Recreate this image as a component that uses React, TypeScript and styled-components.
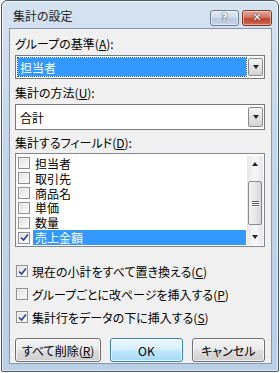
import React from 'react';
import styled, { createGlobalStyle } from 'styled-components';

const GlobalStyle = createGlobalStyle`
  html, body {
    margin: 0;
    padding: 0;
    background: #ffffff;
  }
  body {
    font-family: 'Noto Sans CJK JP', sans-serif;
    font-feature-settings: 'palt';
    font-size: 12px;
    color: #000;
  }
`;

const Window = styled.div`
  width: 278px;
  height: 372px;
  margin: 0 0 0 1px;
  box-sizing: border-box;
  border: 1px solid #4d5a68;
  border-radius: 6px 6px 2px 2px;
  background: linear-gradient(180deg, #d6e3f1 0%, #c2d5ea 40%, #b9cfe6 100%);
  display: flex;
  flex-direction: column;
  padding: 0 6px 7px 7px;
  box-shadow: inset 0 0 0 1px rgba(255, 255, 255, 0.55);
`;

const TitleBar = styled.div`
  height: 27px;
  display: flex;
  align-items: center;
  padding-left: 4px;
`;

const Title = styled.div`
  flex: 1;
  font-size: 12px;
  color: #1e1e1e;
  padding-top: 2px;
`;

const CaptionButton = styled.div<{ $close?: boolean }>`
  width: ${(p) => (p.$close ? 30 : 29)}px;
  height: 16px;
  margin-top: 6px;
  margin-left: ${(p) => (p.$close ? 3 : 0)}px;
  box-sizing: border-box;
  border: 1px solid ${(p) => (p.$close ? '#7e3226' : '#6c7d92')};
  border-radius: 3px;
  display: flex;
  align-items: center;
  justify-content: center;
  background: ${(p) =>
    p.$close
      ? 'linear-gradient(180deg, #e3a99d 0%, #d27562 45%, #c2432d 55%, #cf6a4f 100%)'
      : 'linear-gradient(180deg, #e4ecf5 0%, #cfdbea 45%, #b9c9dc 55%, #c9d7e7 100%)'};
  box-shadow: inset 0 0 0 1px rgba(255, 255, 255, 0.45);
  color: #fff;
  font-family: 'DejaVu Sans', sans-serif;
  font-weight: bold;
  font-size: 11px;
  text-shadow: 0 0 2px #3a4a5e, 0 0 1px #3a4a5e;
`;

const Panel = styled.div`
  flex: 1;
  background: #f0f0f0;
  border: 1px solid #8497ad;
  padding: 0 6px 0 5px;
  display: flex;
  flex-direction: column;
`;

const Label = styled.div<{ $top: number }>`
  margin-top: ${(p) => p.$top}px;
  height: 16px;
  line-height: 16px;
  white-space: nowrap;
`;

const Key = styled.span`
  text-decoration: underline;
`;

const Combo = styled.div<{ $height: number }>`
  margin-top: 3px;
  height: ${(p) => p.$height}px;
  box-sizing: border-box;
  border: 1px solid #7a7a7a;
  background: #fff;
  display: flex;
  align-items: stretch;
  padding: 2px 1px 2px 2px;
`;

const ComboValue = styled.div<{ $selected?: boolean }>`
  flex: 1;
  display: flex;
  align-items: center;
  padding-left: 2px;
  background: ${(p) => (p.$selected ? '#3399ff' : 'transparent')};
  color: ${(p) => (p.$selected ? '#fff' : '#000')};
  outline: ${(p) => (p.$selected ? '1px dotted #1d5fa8' : 'none')};
`;

const DropButton = styled.div`
  width: 15px;
  margin-left: 2px;
  box-sizing: border-box;
  border: 1px solid #8a8a8a;
  border-radius: 2px;
  background: linear-gradient(180deg, #f4f4f4 0%, #e4e4e4 50%, #d4d4d4 100%);
  display: flex;
  align-items: center;
  justify-content: center;
`;

const Arrow = styled.div<{ $up?: boolean }>`
  width: 0;
  height: 0;
  border-left: 3.5px solid transparent;
  border-right: 3.5px solid transparent;
  ${(p) =>
    p.$up ? 'border-bottom: 4px solid #222;' : 'border-top: 4px solid #222;'}
`;

const ListBox = styled.div`
  margin-top: 2px;
  height: 94px;
  box-sizing: border-box;
  border: 1px solid #828790;
  background: #fff;
  display: flex;
  padding: 2px 1px 1px 1px;
`;

const Items = styled.div`
  flex: 1;
  display: flex;
  flex-direction: column;
`;

const Item = styled.div`
  height: 15px;
  display: flex;
  align-items: center;
  overflow: hidden;
`;

const ItemText = styled.div<{ $selected?: boolean }>`
  flex: 1;
  height: 15px;
  line-height: 15px;
  margin-left: 3px;
  padding-left: 2px;
  background: ${(p) => (p.$selected ? '#3399ff' : 'transparent')};
  color: ${(p) => (p.$selected ? '#fff' : '#000')};
`;

const Box = styled.div`
  width: 12px;
  height: 12px;
  margin-left: 1px;
  box-sizing: border-box;
  border: 1px solid #8f8f8f;
  background: linear-gradient(135deg, #dcdcdc 0%, #f2f2f2 60%, #ffffff 100%);
  box-shadow: inset 0 0 0 1px #f4f4f4;
  display: flex;
  align-items: center;
  justify-content: center;
  flex-shrink: 0;
`;

const ScrollBar = styled.div`
  width: 16px;
  margin-left: 1px;
  display: flex;
  flex-direction: column;
  align-items: center;
  background: linear-gradient(90deg, #e6e6e6 0%, #f5f5f5 40%, #f5f5f5 60%, #e6e6e6 100%);
`;

const ScrollArrow = styled.div`
  height: 16px;
  width: 16px;
  display: flex;
  align-items: center;
  justify-content: center;
`;

const Track = styled.div`
  flex: 1;
  width: 100%;
  display: flex;
  flex-direction: column;
  justify-content: flex-end;
  padding-bottom: 4px;
  box-sizing: border-box;
`;

const Thumb = styled.div`
  height: 44px;
  margin: 0 1px;
  box-sizing: border-box;
  border: 1px solid #8b8b8b;
  border-radius: 2px;
  background: linear-gradient(90deg, #f3f3f3 0%, #e8e8e8 50%, #d6d6d6 100%);
  display: flex;
  flex-direction: column;
  align-items: center;
  justify-content: center;
  gap: 1px;
`;

const Grip = styled.div`
  width: 7px;
  height: 1px;
  background: #5c5c5c;
  box-shadow: 0 1px 0 #ffffff;
`;

const Options = styled.div`
  margin-top: 16px;
  display: flex;
  flex-direction: column;
  gap: 7px;
`;

const Option = styled.div`
  height: 16px;
  display: flex;
  align-items: center;
  gap: 4px;
  white-space: nowrap;
`;

const Buttons = styled.div`
  margin-top: 13px;
  display: flex;
  gap: 9px;
`;

const Button = styled.div<{ $default?: boolean; $width: number }>`
  width: ${(p) => p.$width}px;
  height: 24px;
  box-sizing: border-box;
  border: 1px solid ${(p) => (p.$default ? '#3c7fb1' : '#707070')};
  border-radius: 3px;
  display: flex;
  align-items: center;
  justify-content: center;
  background: ${(p) =>
    p.$default
      ? 'linear-gradient(180deg, #eaf6fd 0%, #d9f0fc 45%, #bee6fd 55%, #a7d9f5 100%)'
      : 'linear-gradient(180deg, #f2f2f2 0%, #ebebeb 45%, #dddddd 55%, #cfcfcf 100%)'};
  box-shadow: inset 0 0 0 1px rgba(255, 255, 255, 0.7);
`;

const Check: React.FC = () => (
  <svg width="9" height="9" viewBox="0 0 9 9">
    <path d="M1 4.5 L3.5 7 L8 1.5" fill="none" stroke="#2a3f8f" strokeWidth="1.6" />
  </svg>
);

const CheckBox: React.FC<{ checked?: boolean }> = ({ checked }) => (
  <Box>{checked && <Check />}</Box>
);

const fields = ['担当者', '取引先', '商品名', '単価', '数量', '売上金額'];

const App: React.FC = () => (
  <>
    <GlobalStyle />
    <Window>
      <TitleBar>
        <Title>集計の設定</Title>
        <CaptionButton>?</CaptionButton>
        <CaptionButton $close>✕</CaptionButton>
      </TitleBar>
      <Panel>
        <Label $top={7}>
          グループの基準(<Key>A</Key>):
        </Label>
        <Combo $height={24}>
          <ComboValue $selected>担当者</ComboValue>
          <DropButton>
            <Arrow />
          </DropButton>
        </Combo>
        <Label $top={6}>
          集計の方法(<Key>U</Key>):
        </Label>
        <Combo $height={26}>
          <ComboValue>合計</ComboValue>
          <DropButton>
            <Arrow />
          </DropButton>
        </Combo>
        <Label $top={5}>
          集計するフィールド(<Key>D</Key>):
        </Label>
        <ListBox>
          <Items>
            {fields.map((f, i) => (
              <Item key={f}>
                <CheckBox checked={i === fields.length - 1} />
                <ItemText $selected={i === fields.length - 1}>{f}</ItemText>
              </Item>
            ))}
          </Items>
          <ScrollBar>
            <ScrollArrow>
              <Arrow $up />
            </ScrollArrow>
            <Track>
              <Thumb>
                <Grip />
                <Grip />
                <Grip />
              </Thumb>
            </Track>
            <ScrollArrow>
              <Arrow />
            </ScrollArrow>
          </ScrollBar>
        </ListBox>
        <Options>
          <Option>
            <CheckBox checked />
            <span>
              現在の小計をすべて置き換える(<Key>C</Key>)
            </span>
          </Option>
          <Option>
            <CheckBox />
            <span>
              グループごとに改ページを挿入する(<Key>P</Key>)
            </span>
          </Option>
          <Option>
            <CheckBox checked />
            <span>
              集計行をデータの下に挿入する(<Key>S</Key>)
            </span>
          </Option>
        </Options>
        <Buttons>
          <Button $width={87}>
            <span>
              すべて削除(<Key>R</Key>)
            </span>
          </Button>
          <Button $default $width={73}>
            OK
          </Button>
          <Button $width={74}>キャンセル</Button>
        </Buttons>
      </Panel>
    </Window>
  </>
);

export default App;
